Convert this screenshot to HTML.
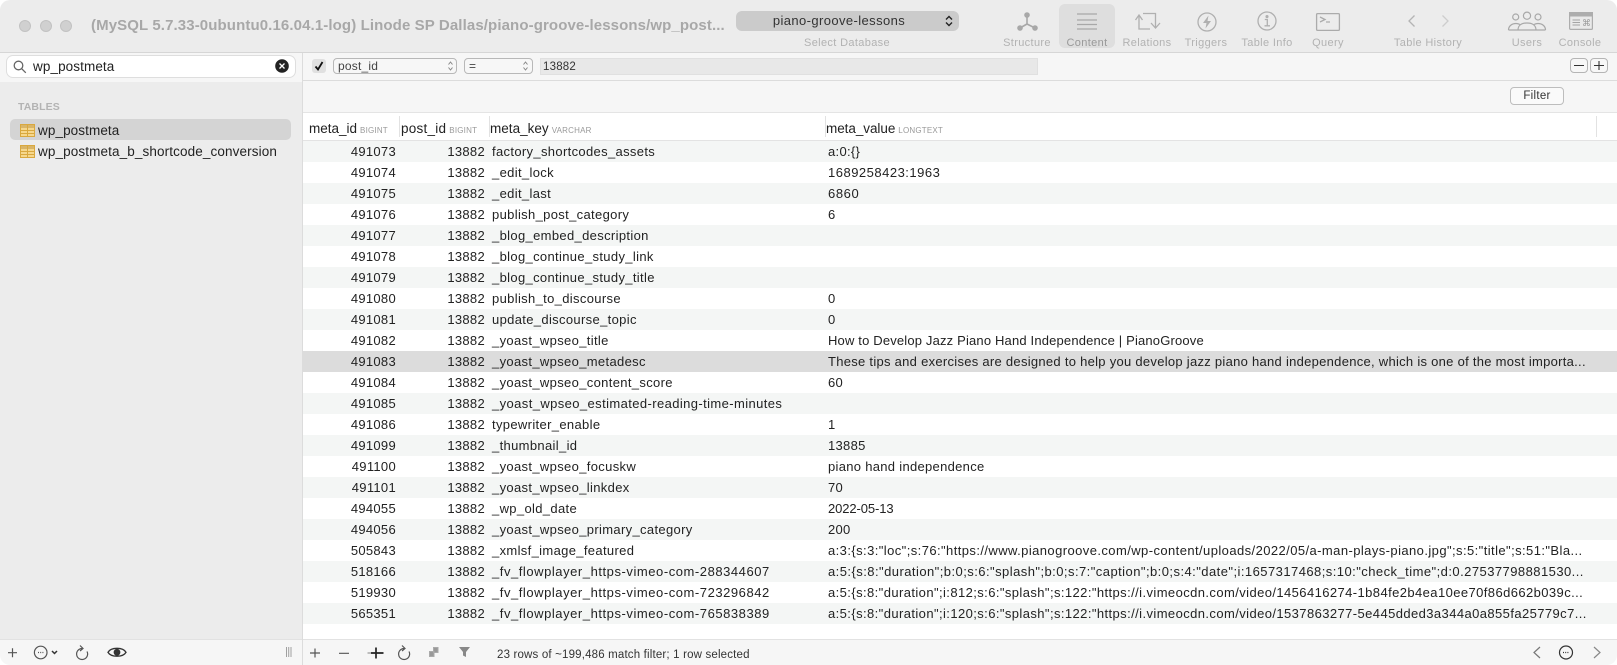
<!DOCTYPE html>
<html><head><meta charset="utf-8"><style>
*{box-sizing:border-box;margin:0;padding:0}
html,body{width:1617px;height:665px;overflow:hidden;background:#fff}
body{font-family:"Liberation Sans",sans-serif;font-size:13px;color:#222;position:relative}
.a{position:absolute;white-space:nowrap}
#win{position:absolute;left:0;top:0;width:1617px;height:665px;border-radius:10px;overflow:hidden;background:#fff;filter:blur(.25px)}
.lb{position:absolute;top:37px;font-size:11px;color:#b2b2b2;transform:translateX(-50%);white-space:nowrap;letter-spacing:.35px}
.tl{position:absolute;top:20px;width:12px;height:12px;border-radius:50%;background:#d0d0d0;border:1px solid #c2c2c2}
.r{position:absolute;left:303px;width:1314px;height:21px;line-height:22px}
.r:nth-child(even){background:#f4f6f5}
.r.s{background:#dcdcdc}
.r b{font-weight:normal;position:absolute;top:0;white-space:nowrap;letter-spacing:.3px}
.i{right:1221px}.p{right:1132px}.r .k{left:189px;letter-spacing:.34px}.v{left:525px}
.h{position:absolute;top:120px;font-size:13.5px;white-space:nowrap;letter-spacing:.25px;line-height:18px}
.h small{font-size:8px;color:#999;letter-spacing:.2px;margin-left:3px}
.sp{position:absolute;top:116px;height:21px;width:1px;background:#e2e2e2}
svg{position:absolute;overflow:visible}
.sel{position:absolute;top:58px;height:16px;border:1px solid #b8b8b8;border-radius:4px;background:#f7f7f7;font-size:12px;line-height:14px;padding-left:4px;color:#444;letter-spacing:.2px}
</style></head><body><div id="win">

<div class="a" style="left:0;top:0;width:1617px;height:53px;background:#ececec;border-bottom:1px solid #d6d6d6"></div>
<div class="tl" style="left:19px"></div><div class="tl" style="left:40px"></div><div class="tl" style="left:60px"></div>
<div class="a" style="left:91px;top:17px;font-size:15px;font-weight:bold;color:#a8a8a8;line-height:18px;letter-spacing:.11px">(MySQL 5.7.33-0ubuntu0.16.04.1-log) Linode SP Dallas/piano-groove-lessons/wp_post...</div>

<div class="a" style="left:736px;top:11px;width:223px;height:20px;border-radius:6px;background:#cbcbcb"></div>
<div class="a" style="left:739px;width:200px;text-align:center;top:12px;font-size:13px;line-height:18px;color:#333;letter-spacing:.4px">piano-groove-lessons</div>
<svg style="left:945px;top:15px" width="8" height="12" fill="none" stroke="#222" stroke-width="1.4"><path d="M1 4.5L4 1.5L7 4.5M1 7.5L4 10.5L7 7.5"/></svg>
<div class="lb" style="left:847px">Select Database</div>

<div class="a" style="left:1059px;top:4px;width:56px;height:44px;background:#dedede;border-radius:6px"></div>

<svg style="left:1015px;top:11px" width="24" height="22" fill="#a8a8a8" stroke="#a8a8a8" stroke-width="1.6"><circle cx="12" cy="4" r="2"/><circle cx="5" cy="17" r="2"/><circle cx="20" cy="17" r="2"/><path d="M12 4V13M12 13L5 17M12 13L20 17" fill="none"/></svg>
<div class="lb" style="left:1027px">Structure</div>

<svg style="left:1077px;top:12px" width="21" height="19" stroke="#a8a8a8" stroke-width="1.2"><path d="M0 2H20M0 8H20M0 12.5H20M0 17H20"/></svg>
<div class="lb" style="left:1087px;color:#999">Content</div>

<svg style="left:1135px;top:12px" width="26" height="20" fill="none" stroke="#b0b0b0" stroke-width="1.3"><path d="M.5 8L4 3L7.5 8M4 3V17H15M8 1.5H20.5V16M16 11L20.5 16L25 11"/></svg>
<div class="lb" style="left:1147px">Relations</div>

<svg style="left:1197px;top:12px" width="20" height="20" fill="none" stroke="#b0b0b0" stroke-width="1.3"><circle cx="10" cy="10" r="9"/><path d="M11.5 3.5L6 11H9.5L8.5 16.5L14 9H10.5Z" fill="#b0b0b0" stroke="none"/></svg>
<div class="lb" style="left:1206px">Triggers</div>

<svg style="left:1257px;top:11px" width="20" height="20" fill="none" stroke="#b0b0b0" stroke-width="1.3"><circle cx="10" cy="10" r="9"/><circle cx="10" cy="5.6" r=".9" fill="#b0b0b0"/><path d="M7.8 8.5H10.3V14.5M7.5 14.8H13"/></svg>
<div class="lb" style="left:1267px">Table Info</div>

<svg style="left:1316px;top:13px" width="24" height="18" fill="none" stroke="#ababab" stroke-width="1.3"><rect x=".6" y=".6" width="22.8" height="16.8" rx="1"/><path d="M4 4L9 6.5L4 9M10 9H14"/></svg>
<div class="lb" style="left:1328px">Query</div>

<svg style="left:1408px;top:14px" width="8" height="14" fill="none" stroke="#b4b4b4" stroke-width="1.3"><path d="M6.5 1.5L1 7L6.5 12.5"/></svg>
<svg style="left:1441px;top:14px" width="8" height="14" fill="none" stroke="#cdcdcd" stroke-width="1.3"><path d="M1.5 1.5L7 7L1.5 12.5"/></svg>
<div class="lb" style="left:1428px">Table History</div>

<svg style="left:1508px;top:12px" width="38" height="19" fill="none" stroke="#a8a8a8" stroke-width="1.2"><circle cx="7.7" cy="5" r="3"/><circle cx="19" cy="3.7" r="3.6"/><circle cx="30" cy="5" r="3"/><path d="M10 18C10 13 14 11 19 11C24 11 28 13 28 18ZM.5 18C.5 14 4 11.5 8 11.5C9.5 11.5 11 12 12 12.5M.5 18H10M37.5 18C37.5 14 34 11.5 30 11.5C28.5 11.5 27 12 26 12.5M37.5 18H28"/></svg>
<div class="lb" style="left:1527px">Users</div>

<svg style="left:1569px;top:12px" width="24" height="18"><rect x=".6" y=".6" width="22.8" height="16.8" rx="1" fill="#e9e9e9" stroke="#adadad" stroke-width="1.2"/><rect x="0" y="0" width="24" height="4.5" fill="#adadad"/><path d="M3.5 8H11M3.5 10.5H11M3.5 13H11" stroke="#a4a4a4"/><text x="13" y="14" font-size="9" fill="#999" font-family="DejaVu Sans">⌘</text></svg>
<div class="lb" style="left:1580px">Console</div>

<!-- sidebar -->
<div class="a" style="left:0;top:53px;width:302px;height:586px;background:#ececec"></div>
<div class="a" style="left:0;top:53px;width:302px;height:29px;background:#f6f6f6"></div>
<div class="a" style="left:7px;top:56px;width:288px;height:21px;background:#fff;border-radius:6px;box-shadow:0 0 0 1px #dedede"></div>
<svg style="left:13px;top:60px" width="14" height="14" fill="none" stroke="#666" stroke-width="1.3"><circle cx="5.5" cy="5.5" r="4.3"/><path d="M8.8 8.8L12.8 12.8"/></svg>
<div class="a" style="left:33px;top:58px;font-size:13.5px;line-height:18px;color:#222;letter-spacing:.1px">wp_postmeta</div>
<svg style="left:275px;top:59px" width="14" height="14"><circle cx="7" cy="7" r="6.8" fill="#222"/><path d="M4.5 4.5L9.5 9.5M9.5 4.5L4.5 9.5" stroke="#fff" stroke-width="1.3"/></svg>
<div class="a" style="left:18px;top:101px;font-size:10.5px;font-weight:bold;color:#b3b3b3;letter-spacing:.1px;line-height:13px">TABLES</div>
<div class="a" style="left:10px;top:119px;width:281px;height:21px;background:#d4d4d4;border-radius:5px"></div>
<svg style="left:20px;top:124px" width="15" height="13"><rect x=".5" y=".5" width="14" height="12" fill="#f6d78c" stroke="#d9a83e"/><rect x="1" y="1" width="13" height="3" fill="#d9b568"/><path d="M7.5 1V12M1 6.5H14M1 9.5H14" stroke="#d9a83e"/></svg>
<svg style="left:20px;top:145px" width="15" height="13"><rect x=".5" y=".5" width="14" height="12" fill="#f6d78c" stroke="#d9a83e"/><rect x="1" y="1" width="13" height="3" fill="#d9b568"/><path d="M7.5 1V12M1 6.5H14M1 9.5H14" stroke="#d9a83e"/></svg>
<div class="a" style="left:38px;top:122px;font-size:13.5px;line-height:18px;letter-spacing:.1px">wp_postmeta</div>
<div class="a" style="left:38px;top:143px;font-size:13.5px;line-height:18px;letter-spacing:.12px">wp_postmeta_b_shortcode_conversion</div>
<div class="a" style="left:302px;top:53px;width:1px;height:612px;background:#dcdcdc"></div>

<!-- filter bars -->
<div class="a" style="left:303px;top:53px;width:1314px;height:28px;background:#f6f6f6;border-bottom:1px solid #dcdcdc"></div>
<div class="a" style="left:303px;top:81px;width:1314px;height:32px;background:#f6f6f6;border-bottom:1px solid #e4e4e4"></div>
<div class="a" style="left:312px;top:59px;width:14px;height:14px;background:#e0e0e0;border-radius:3px"></div>
<svg style="left:314px;top:61px" width="10" height="10" fill="none" stroke="#111" stroke-width="1.8"><path d="M1.5 5.5L4 8.5L8.5 1"/></svg>
<div class="sel" style="left:333px;width:124px">post_id</div>
<div class="sel" style="left:464px;width:69px">=</div>
<svg style="left:448px;top:61px" width="5" height="10" fill="none" stroke="#888"><path d="M.5 3.5L2.5 1L4.5 3.5M.5 6.5L2.5 9L4.5 6.5"/></svg>
<svg style="left:523px;top:61px" width="5" height="10" fill="none" stroke="#888"><path d="M.5 3.5L2.5 1L4.5 3.5M.5 6.5L2.5 9L4.5 6.5"/></svg>
<div class="a" style="left:540px;top:58px;width:498px;height:17px;background:#e8e8e8;border:1px solid #e0e0e0;font-size:11.5px;line-height:16px;padding-left:2px;color:#333;letter-spacing:.2px">13882</div>
<div class="a" style="left:1570px;top:58px;width:18px;height:15px;border:1px solid #b5b5b5;border-radius:4px;background:#f7f7f7"></div>
<div class="a" style="left:1590px;top:58px;width:18px;height:15px;border:1px solid #b5b5b5;border-radius:4px;background:#f7f7f7"></div>
<svg style="left:1570px;top:58px" width="38" height="15" stroke="#333" stroke-width="1.1"><path d="M4 7.5H14M24 7.5H34M29 3V12"/></svg>
<div class="a" style="left:1510px;top:87px;width:54px;height:18px;border:1px solid #bdbdbd;border-radius:4px;background:#fafafa;text-align:center;font-size:11.5px;line-height:17px;color:#333;letter-spacing:.3px">Filter</div>

<!-- header -->
<div class="a" style="left:303px;top:113px;width:1314px;height:28px;background:#fff;border-bottom:1px solid #e3e3e3"></div>
<div class="h" style="left:309px;letter-spacing:0">meta_id<small>BIGINT</small></div>
<div class="sp" style="left:399px"></div>
<div class="h" style="left:401px">post_id<small>BIGINT</small></div>
<div class="sp" style="left:489px"></div>
<div class="h" style="left:490px;letter-spacing:.02px">meta_key<small>VARCHAR</small></div>
<div class="sp" style="left:825px"></div>
<div class="h" style="left:826px;letter-spacing:-.05px">meta_value<small>LONGTEXT</small></div>
<div class="sp" style="left:1596px"></div>

<!-- rows -->
<div class="a" style="left:0;top:141px;width:1617px;height:498px"><div style="position:absolute;left:0;top:0;width:0;height:0"></div>
<div class="r" style="top:0"><b class="i">491073</b><b class="p">13882</b><b class="k">factory_shortcodes_assets</b><b class="v">a:0:{}</b></div>
<div class="r" style="top:21px"><b class="i">491074</b><b class="p">13882</b><b class="k">_edit_lock</b><b class="v" style="letter-spacing:.5px">1689258423:1963</b></div>
<div class="r" style="top:42px"><b class="i">491075</b><b class="p">13882</b><b class="k">_edit_last</b><b class="v" style="letter-spacing:.6px">6860</b></div>
<div class="r" style="top:63px"><b class="i">491076</b><b class="p">13882</b><b class="k">publish_post_category</b><b class="v">6</b></div>
<div class="r" style="top:84px"><b class="i">491077</b><b class="p">13882</b><b class="k">_blog_embed_description</b></div>
<div class="r" style="top:105px"><b class="i">491078</b><b class="p">13882</b><b class="k">_blog_continue_study_link</b></div>
<div class="r" style="top:126px"><b class="i">491079</b><b class="p">13882</b><b class="k">_blog_continue_study_title</b></div>
<div class="r" style="top:147px"><b class="i">491080</b><b class="p">13882</b><b class="k">publish_to_discourse</b><b class="v">0</b></div>
<div class="r" style="top:168px"><b class="i">491081</b><b class="p">13882</b><b class="k">update_discourse_topic</b><b class="v">0</b></div>
<div class="r" style="top:189px"><b class="i">491082</b><b class="p">13882</b><b class="k">_yoast_wpseo_title</b><b class="v" style="letter-spacing:.17px">How to Develop Jazz Piano Hand Independence | PianoGroove</b></div>
<div class="r s" style="top:210px"><b class="i">491083</b><b class="p">13882</b><b class="k">_yoast_wpseo_metadesc</b><b class="v" style="letter-spacing:.28px">These tips and exercises are designed to help you develop jazz piano hand independence, which is one of the most importa...</b></div>
<div class="r" style="top:231px"><b class="i">491084</b><b class="p">13882</b><b class="k">_yoast_wpseo_content_score</b><b class="v">60</b></div>
<div class="r" style="top:252px"><b class="i">491085</b><b class="p">13882</b><b class="k" style="letter-spacing:.4px">_yoast_wpseo_estimated-reading-time-minutes</b></div>
<div class="r" style="top:273px"><b class="i">491086</b><b class="p">13882</b><b class="k">typewriter_enable</b><b class="v">1</b></div>
<div class="r" style="top:294px"><b class="i">491099</b><b class="p">13882</b><b class="k">_thumbnail_id</b><b class="v">13885</b></div>
<div class="r" style="top:315px"><b class="i">491100</b><b class="p">13882</b><b class="k">_yoast_wpseo_focuskw</b><b class="v">piano hand independence</b></div>
<div class="r" style="top:336px"><b class="i">491101</b><b class="p">13882</b><b class="k">_yoast_wpseo_linkdex</b><b class="v">70</b></div>
<div class="r" style="top:357px"><b class="i">494055</b><b class="p">13882</b><b class="k">_wp_old_date</b><b class="v" style="letter-spacing:-.1px">2022-05-13</b></div>
<div class="r" style="top:378px"><b class="i">494056</b><b class="p">13882</b><b class="k">_yoast_wpseo_primary_category</b><b class="v">200</b></div>
<div class="r" style="top:399px"><b class="i">505843</b><b class="p">13882</b><b class="k">_xmlsf_image_featured</b><b class="v" style="letter-spacing:.42px">a:3:{s:3:"loc";s:76:"https://www.pianogroove.com/wp-content/uploads/2022/05/a-man-plays-piano.jpg";s:5:"title";s:51:"Bla...</b></div>
<div class="r" style="top:420px"><b class="i">518166</b><b class="p">13882</b><b class="k" style="letter-spacing:.55px">_fv_flowplayer_https-vimeo-com-288344607</b><b class="v" style="letter-spacing:.45px">a:5:{s:8:"duration";b:0;s:6:"splash";b:0;s:7:"caption";b:0;s:4:"date";i:1657317468;s:10:"check_time";d:0.27537798881530...</b></div>
<div class="r" style="top:441px"><b class="i">519930</b><b class="p">13882</b><b class="k" style="letter-spacing:.55px">_fv_flowplayer_https-vimeo-com-723296842</b><b class="v" style="letter-spacing:.41px">a:5:{s:8:"duration";i:812;s:6:"splash";s:122:"https://i.vimeocdn.com/video/1456416274-1b84fe2b4ea10ee70f86d662b039c...</b></div>
<div class="r" style="top:462px"><b class="i">565351</b><b class="p">13882</b><b class="k" style="letter-spacing:.55px">_fv_flowplayer_https-vimeo-com-765838389</b><b class="v" style="letter-spacing:.41px">a:5:{s:8:"duration";i:120;s:6:"splash";s:122:"https://i.vimeocdn.com/video/1537863277-5e445dded3a344a0a855fa25779c7...</b></div>
<div class="r" style="top:483px;height:15px"></div>
</div>

<!-- footer -->
<div class="a" style="left:0;top:639px;width:1617px;height:26px;background:#f6f6f6;border-top:1px solid #e2e2e2"></div>
<div class="a" style="left:302px;top:639px;width:1px;height:26px;background:#dcdcdc"></div>
<svg style="left:0;top:640px" width="1617" height="25" fill="none" stroke="#555" stroke-width="1.2">
<path d="M8 12.7H17M12.5 8.2V17.2"/>
<circle cx="40.7" cy="12.5" r="6.3"/><path d="M38 12.5H44" stroke-dasharray="1 1.2"/>
<path d="M52 11L54.5 13.5L57 11" stroke-width="1.5" stroke="#333"/>
<path d="M82 8.5A5.5 5.5 0 1 0 87 11.5M80 5.5L83 8.5L80 11"/>
<path d="M108 12.3C111 7 123 7 126 12.3C123 17.5 111 17.5 108 12.3Z" stroke-width="1.4" stroke="#333"/><circle cx="117" cy="12.3" r="2.8" fill="#333" stroke="#333"/>
<path d="M286.5 7V17M288.7 7V17M291 7V17" stroke="#a0a0a0" stroke-width="1"/>
<path d="M310 13H320M315 8.5V17.5"/>
<path d="M339 13.3H349"/>
<path d="M367.5 13H371" stroke="#aaa" stroke-width="1.6"/><path d="M371 13H383.5M376 7.5V18.5" stroke="#222" stroke-width="1.7"/>
<path d="M404 8.5A5.5 5.5 0 1 0 409 11.5M402 5.5L405 8.5L402 11"/>
<path d="M433.5 7.5H438V12.5H433.5ZM429.5 11.5H434V16.5H429.5Z" fill="#999" stroke="#aaa" stroke-width="1"/>
<path d="M459 7H470L466 12V17L463 15.5V12Z" fill="#888" stroke="none"/>
<path d="M1540 7L1534 12.5L1540 18" stroke="#777"/>
<circle cx="1566" cy="12.5" r="6.5" stroke="#333"/><path d="M1563 12.5H1569" stroke="#333" stroke-dasharray="1 1.2"/>
<path d="M1594 7L1600 12.5L1594 18" stroke="#888"/>
</svg>
<div class="a" style="left:497px;top:647px;font-size:11.5px;line-height:16px;color:#333;letter-spacing:.17px">23 rows of ~199,486 match filter; 1 row selected</div>

</div></body></html>
